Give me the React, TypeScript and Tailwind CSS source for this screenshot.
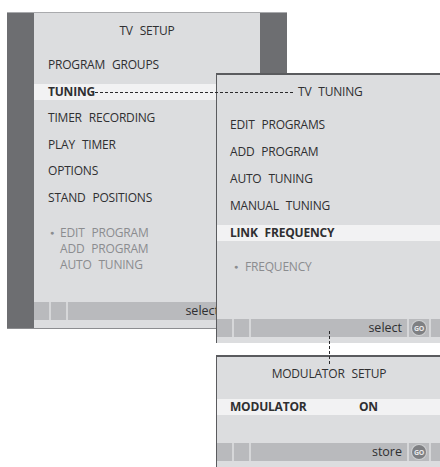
import React from "react";

const font = { fontFamily: '"Open Sans", "Noto Sans", sans-serif' };

function Go() {
  return (
    <div className="flex h-[14px] w-[14px] items-center justify-center rounded-full bg-[#7f8083] ring-1 ring-[#cfd0d2]">
      <span className="text-[7px] font-bold leading-none tracking-[-0.3px] text-[#e8e8ea]">GO</span>
    </div>
  );
}

function Footer({ label }: { label: string }) {
  return (
    <div className="flex h-[18px] shrink-0 gap-[2px] bg-[#d6d7d9]">
      <div className="w-[15px] bg-[#b9babd]" />
      <div className="w-[15px] bg-[#b9babd]" />
      <div className="flex w-[156px] items-center justify-end bg-[#b9babd] pr-[5px] text-[12.5px] text-[#2f2f31]">{label}</div>
      <div className="flex w-[20px] items-center justify-center bg-[#b9babd]">
        <Go />
      </div>
      <div className="flex-1 bg-[#b9babd]" />
    </div>
  );
}

const item = "h-[16px] flex items-center whitespace-nowrap text-[12px] tracking-[-0.2px] [word-spacing:4px] text-[#2f2f31]";

export default function App() {
  return (
    <div className="relative h-[467px] w-[440px] overflow-hidden bg-white" style={font}>
      {/* Panel 1: TV SETUP */}
      <div className="absolute left-[7px] top-[12px] flex h-[317px] w-[280px] border-b border-[#8c8d90] border-t border-t-[#a9aaad]">
        <div className="w-[27px] bg-[#6d6e71]" />
        <div className="flex flex-1 flex-col bg-[#dcdddf]">
          <div className={item + " mt-[10px] justify-center"}>TV SETUP</div>
          <div className="mt-[18px] flex flex-col gap-[10.6px]">
            <div className={item + " pl-[14px]"}>PROGRAM GROUPS</div>
            <div className={item + " bg-[#f2f2f3] pl-[14px] font-bold"}>TUNING</div>
            <div className={item + " pl-[14px]"}>TIMER RECORDING</div>
            <div className={item + " pl-[14px]"}>PLAY TIMER</div>
            <div className={item + " pl-[14px]"}>OPTIONS</div>
            <div className={item + " pl-[14px]"}>STAND POSITIONS</div>
          </div>
          <div className="mt-[19px] flex pl-[16px] text-[12px] leading-[16px] tracking-[-0.2px] text-[#8b8c8f] [word-spacing:4px]">
            <span className="mr-[6px] text-[7px]">●</span>
            <div className="flex flex-col">
              <span>EDIT PROGRAM</span>
              <span>ADD PROGRAM</span>
              <span>AUTO TUNING</span>
            </div>
          </div>
          <div className="flex-1" />
          <Footer label="select" />
          <div className="h-[8px]" />
        </div>
        <div className="w-[27px] bg-[#6d6e71]" />
      </div>

      {/* Panel 2: TV TUNING */}
      <div className="absolute left-[216px] top-[73px] flex h-[270px] w-[260px] flex-col border-l border-t-2 border-[#5a5b5e] bg-[#dcdddf]">
        <div className={item + " mt-[9px] pl-[81px]"}>TV TUNING</div>
        <div className="mt-[17px] flex flex-col gap-[11px]">
          <div className={item + " pl-[13px]"}>EDIT PROGRAMS</div>
          <div className={item + " pl-[13px]"}>ADD PROGRAM</div>
          <div className={item + " pl-[13px]"}>AUTO TUNING</div>
          <div className={item + " pl-[13px]"}>MANUAL TUNING</div>
          <div className={item + " bg-[#f2f2f3] pl-[13px] font-bold"}>LINK FREQUENCY</div>
        </div>
        <div className="mt-[18px] flex h-[16px] items-center pl-[17px] text-[12px] tracking-[-0.2px] text-[#8b8c8f]">
          <span className="mr-[7px] text-[7px]">●</span>
          <span>FREQUENCY</span>
        </div>
        <div className="flex-1" />
        <Footer label="select" />
        <div className="h-[6px]" />
      </div>

      {/* Panel 3: MODULATOR SETUP */}
      <div className="absolute left-[216px] top-[355px] flex h-[130px] w-[260px] flex-col border-l border-t-2 border-[#5a5b5e] bg-[#dcdddf]">
        <div className={item + " mt-[9px] w-[224px] justify-center"}>MODULATOR SETUP</div>
        <div className={item + " mt-[17px] bg-[#f2f2f3] pl-[13px] font-bold"}>
          <span className="w-[129px]">MODULATOR</span>
          <span>ON</span>
        </div>
        <div className="h-[28px]" />
        <Footer label="store" />
        <div className="flex-1" />
      </div>

      {/* Connectors */}
      <svg className="absolute left-0 top-0" width="440" height="467">
        <line x1="95" y1="92.5" x2="294" y2="92.5" stroke="#2a2a2c" strokeWidth="1" strokeDasharray="3 2" />
        <line x1="329.5" y1="331" x2="329.5" y2="364" stroke="#2a2a2c" strokeWidth="1" strokeDasharray="3 2" />
      </svg>
    </div>
  );
}
